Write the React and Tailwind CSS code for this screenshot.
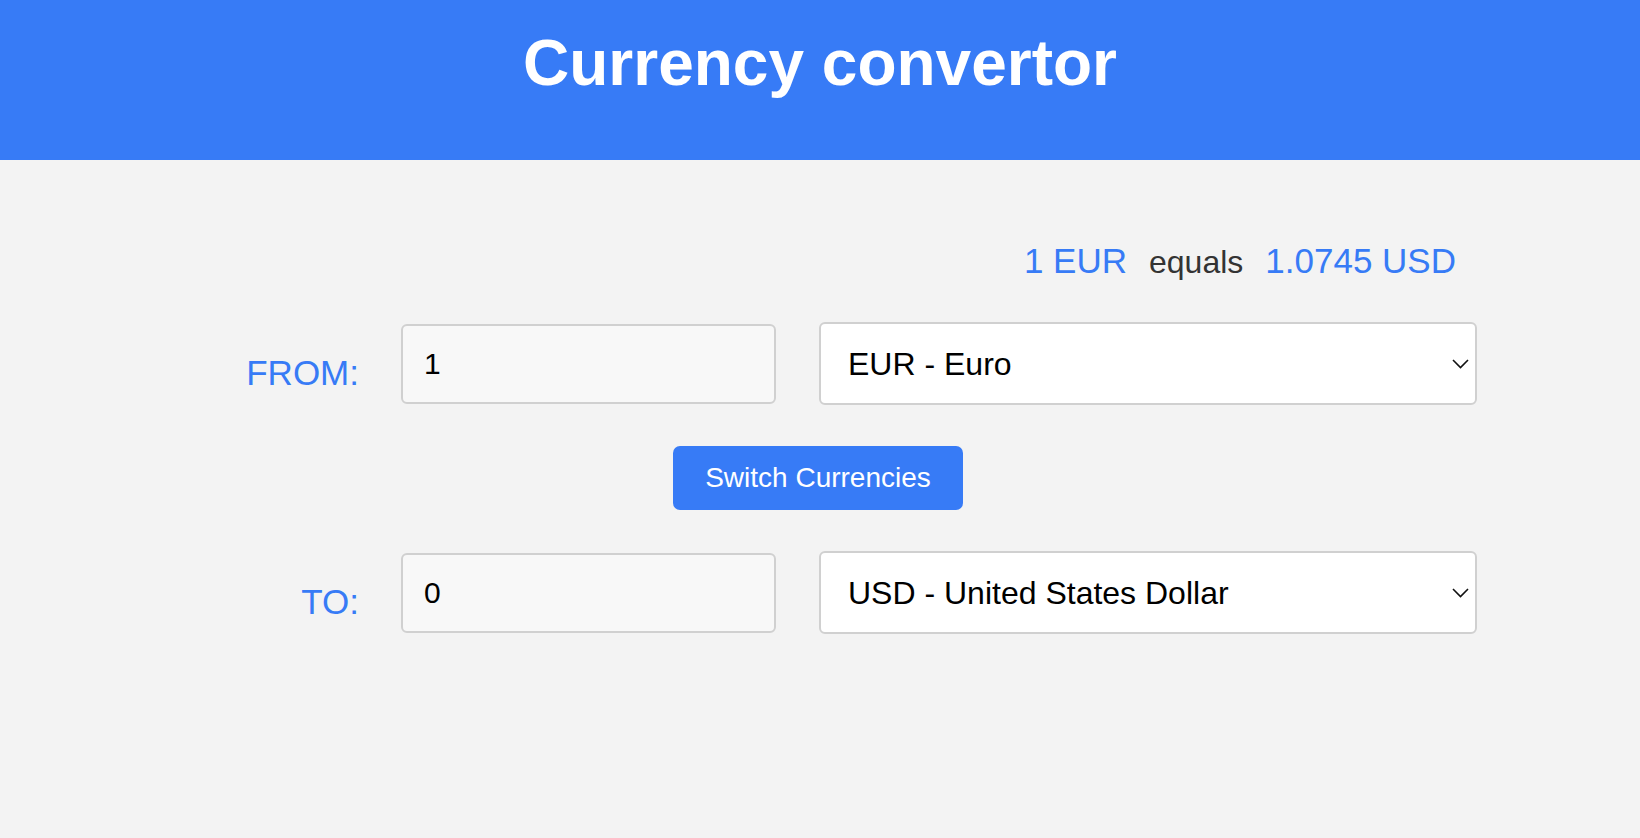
import { useState } from "react";

const rates = { EUR: 1, USD: 1.0745 };

const currencies = [
  { code: "EUR", name: "Euro" },
  { code: "USD", name: "United States Dollar" },
];

function CurrencySelect({ value, onChange }) {
  return (
    <div className="relative w-[658px] h-[83px]">
      <select
        value={value}
        onChange={(e) => onChange(e.target.value)}
        className="appearance-none w-full h-full bg-white border-2 border-[#d0d0d0] rounded-[6px] pl-[27px] pr-12 text-[32px] text-black outline-none"
      >
        {currencies.map((c) => (
          <option key={c.code} value={c.code}>
            {c.code} - {c.name}
          </option>
        ))}
      </select>
      <svg
        className="absolute right-[8px] top-1/2 -translate-y-1/2 pointer-events-none"
        width="17"
        height="10"
        viewBox="0 0 17 10"
        fill="none"
      >
        <path d="M1 1l7.5 7.5L16 1" stroke="#111" strokeWidth="1.6" />
      </svg>
    </div>
  );
}

function Row({ label, amount, onAmount, currency, onCurrency }) {
  return (
    <div className="flex items-center">
      <label className="w-[159px] text-right text-[35px] leading-none text-[#377bf6] mt-[18px]">
        {label}
      </label>
      <input
        type="number"
        value={amount}
        onChange={(e) => onAmount && onAmount(e.target.value)}
        readOnly={!onAmount}
        className="ml-[42px] w-[375px] h-[80px] bg-[#f8f8f8] border-2 border-[#d0d0d0] rounded-[6px] pl-[21px] text-[30px] text-black outline-none"
      />
      <div className="ml-[43px]">
        <CurrencySelect value={currency} onChange={onCurrency} />
      </div>
    </div>
  );
}

export default function App() {
  const [amount, setAmount] = useState("1");
  const [from, setFrom] = useState("EUR");
  const [to, setTo] = useState("USD");

  const rate = rates[to] / rates[from];
  const converted = 0;

  const switchCurrencies = () => {
    setFrom(to);
    setTo(from);
  };

  return (
    <div
      className="min-h-[838px] bg-[#f3f3f3]"
      style={{ fontFamily: '"Liberation Sans", Arial, sans-serif' }}
    >
      <header className="h-[160px] bg-[#377bf6] pt-[31px]">
        <h1 className="text-center text-white text-[64px] font-bold leading-none">
          Currency convertor
        </h1>
      </header>

      <main className="w-[1277px] ml-[200px] pt-[83px]">
        <div className="flex items-baseline justify-end gap-[22px] pr-[21px] leading-none">
          <span className="text-[35px] text-[#377bf6]">1 {from}</span>
          <span className="text-[32px] text-[#333]">equals</span>
          <span className="text-[35px] text-[#377bf6]">
            {rate.toFixed(4)} {to}
          </span>
        </div>

        <div className="mt-[44px]">
          <Row
            label="FROM:"
            amount={amount}
            onAmount={setAmount}
            currency={from}
            onCurrency={setFrom}
          />
        </div>

        <div className="flex justify-center mt-[41px] pr-[41px]">
          <button
            type="button"
            onClick={switchCurrencies}
            className="h-[64px] px-[32px] bg-[#377bf6] text-white text-[28px] rounded-[7px]"
          >
            Switch Currencies
          </button>
        </div>

        <div className="mt-[41px]">
          <Row label="TO:" amount={converted} currency={to} onCurrency={setTo} />
        </div>
      </main>
    </div>
  );
}
